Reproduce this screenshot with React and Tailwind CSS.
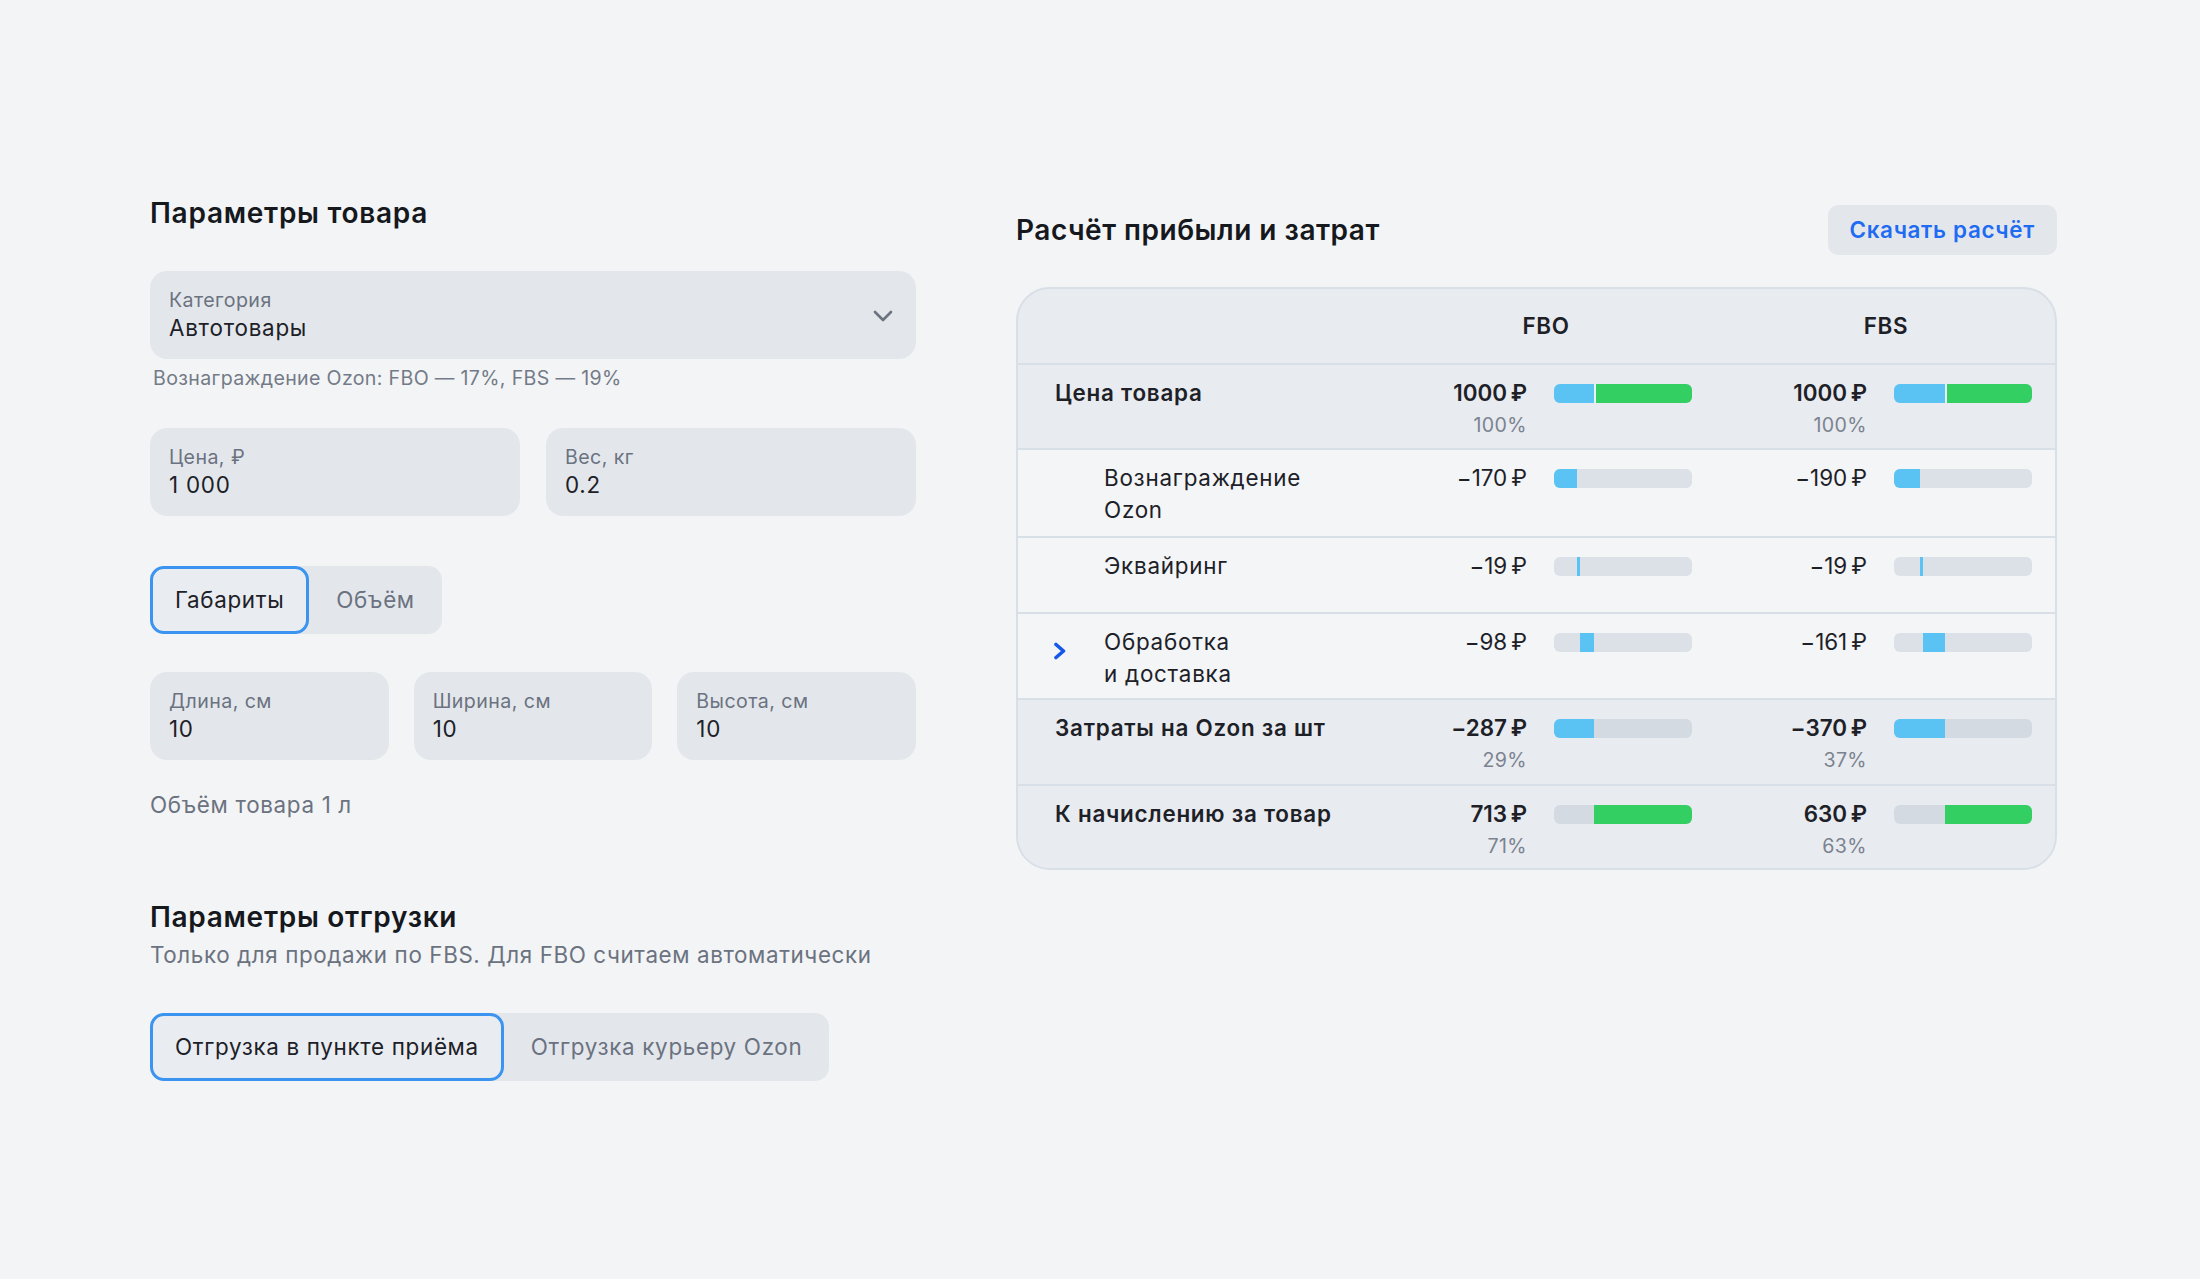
import React from 'react'

// Калькулятор Ozon: параметры товара слева, расчёт прибыли справа

function Field({ label, value, className = '' }) {
  return (
    <div className={`relative h-[88px] rounded-[17px] bg-[#e3e7ec] pl-[19px] pt-[15px] ${className}`}>
      <div className="text-[19.6px] leading-[28px] tracking-[0.022em] text-[#6b7280]">{label}</div>
      <div className="text-[22.4px] leading-[28px] tracking-[0.034em] text-[#1d2127]">{value}</div>
    </div>
  )
}

function Segmented({ options, active }) {
  return (
    <div className="inline-flex h-[68px] rounded-[14px] bg-[#e3e7ec]">
      {options.map((o, i) =>
        i === active ? (
          <button
            key={o}
            className="rounded-[14px] border-[3px] border-[#3b94ef] bg-[#e9edf2] px-[22px] text-[22.4px] tracking-[0.03em] text-[#1d2127]"
          >
            {o}
          </button>
        ) : (
          <button key={o} className="px-[27px] text-[22.4px] tracking-[0.03em] text-[#6b7280]">
            {o}
          </button>
        )
      )}
    </div>
  )
}

const B = 'b'
const G = 'g'

const rows = [
  {
    label: ['Цена товара'],
    strong: true,
    h: 'h-[85px]',
    fbo: { v: '1000\u202F₽', p: '100%', segs: [{ l: 0, w: 28.7, c: B }, { l: 28.7, w: 71.3, c: G, gap: true }] },
    fbs: { v: '1000\u202F₽', p: '100%', segs: [{ l: 0, w: 37, c: B }, { l: 37, w: 63, c: G, gap: true }] },
  },
  {
    label: ['Вознаграждение', 'Ozon'],
    h: 'h-[88px]',
    fbo: { v: '−170\u202F₽', segs: [{ l: 0, w: 17, c: B }] },
    fbs: { v: '−190\u202F₽', segs: [{ l: 0, w: 19, c: B }] },
  },
  {
    label: ['Эквайринг'],
    h: 'h-[76px]',
    fbo: { v: '−19\u202F₽', segs: [{ l: 17, w: 1.9, c: B }] },
    fbs: { v: '−19\u202F₽', segs: [{ l: 19, w: 1.9, c: B }] },
  },
  {
    label: ['Обработка', 'и доставка'],
    chevron: true,
    h: 'h-[86px]',
    fbo: { v: '−98\u202F₽', segs: [{ l: 18.9, w: 9.8, c: B }] },
    fbs: { v: '−161\u202F₽', segs: [{ l: 20.9, w: 16.1, c: B }] },
  },
  {
    label: ['Затраты на Ozon за шт'],
    strong: true,
    h: 'h-[86px]',
    fbo: { v: '−287\u202F₽', p: '29%', segs: [{ l: 0, w: 28.7, c: B }] },
    fbs: { v: '−370\u202F₽', p: '37%', segs: [{ l: 0, w: 37, c: B }] },
  },
  {
    label: ['К начислению за товар'],
    strong: true,
    h: 'h-[84px]',
    fbo: { v: '713\u202F₽', p: '71%', segs: [{ l: 28.7, w: 71.3, c: G }] },
    fbs: { v: '630\u202F₽', p: '63%', segs: [{ l: 37, w: 63, c: G }] },
  },
]

function Bar({ segs, dark }) {
  return (
    <div
      className={`relative ml-[27px] mt-[7px] h-[19px] w-[138px] shrink-0 overflow-hidden rounded-[6px] ${
        dark ? 'bg-[#d4dae2]' : 'bg-[#dce1e7]'
      }`}
    >
      {segs.map((s, i) => (
        <div
          key={i}
          className={`absolute inset-y-0 ${s.c === G ? 'bg-[#33cf62]' : 'bg-[#5bc3f3]'} ${
            s.gap ? 'border-l-2 border-[#e6f3f2]' : ''
          }`}
          style={{ left: `${s.l}%`, width: `${s.w}%` }}
        />
      ))}
    </div>
  )
}

function Cell({ data, strong }) {
  return (
    <div className="flex items-start">
      <div className="w-[127px] text-right">
        <div
          className={`whitespace-nowrap text-[22.4px] leading-[32px] tracking-[0.03em] text-[#1d2127] ${
            strong ? 'font-semibold' : 'font-normal'
          }`}
        >
          {data.v}
        </div>
        {data.p && (
          <div className="text-[19.6px] leading-[32px] tracking-[0.02em] text-[#7b8390]">{data.p}</div>
        )}
      </div>
      <Bar segs={data.segs} dark={strong} />
    </div>
  )
}

function Row({ row }) {
  return (
    <div
      className={`grid grid-cols-[1fr_292px_292px] gap-x-[48px] border-t-2 border-[#d8dfe7] pl-[37px] pr-[23px] pt-[12px] ${row.h} ${
        row.strong ? 'bg-[#e8ebef]' : 'bg-[#f3f5f7]'
      }`}
    >
      <div className="flex items-start">
        {!row.strong && (
          <div className="w-[49px] shrink-0">
            {row.chevron && (
              <svg className="mt-[16px] -ml-[2px]" width="14" height="18" viewBox="0 0 14 18" fill="none">
                <path d="M3 2.5 L10.5 9 L3 15.5" stroke="#1658ea" strokeWidth="3.6" strokeLinecap="round" strokeLinejoin="round" />
              </svg>
            )}
          </div>
        )}
        <div
          className={`whitespace-nowrap text-[22.4px] leading-[32px] tracking-[0.034em] text-[#1d2127] ${
            row.strong ? 'font-semibold' : 'font-normal'
          }`}
        >
          {row.label.map(l => (
            <div key={l}>{l}</div>
          ))}
        </div>
      </div>
      <Cell data={row.fbo} strong={row.strong} />
      <Cell data={row.fbs} strong={row.strong} />
    </div>
  )
}

export default function App() {
  return (
    <div className="min-h-screen bg-[#f3f4f6] font-['Inter','Noto_Sans',sans-serif] antialiased">
      <div className="flex gap-[100px] pl-[150px] pt-[195px]">
        {/* левая колонка */}
        <div className="w-[766px] shrink-0">
          <h2 className="text-[28px] font-semibold leading-[36px] tracking-[0.026em] text-[#15181d]">
            Параметры товара
          </h2>

          <div className="relative mt-[40px]">
            <Field label="Категория" value="Автотовары" />
            <svg
              className="absolute right-[23px] top-[39px]"
              width="20"
              height="12"
              viewBox="0 0 20 12"
              fill="none"
            >
              <path d="M2 2 L10 10 L18 2" stroke="#6b7280" strokeWidth="2.6" strokeLinecap="round" strokeLinejoin="round" />
            </svg>
          </div>
          <p className="mt-[5px] pl-[3px] text-[19.6px] leading-[28px] tracking-[0.017em] text-[#737b88]">
            Вознаграждение Ozon: FBO — 17%, FBS — 19%
          </p>

          <div className="mt-[36px] grid grid-cols-2 gap-[26px]">
            <Field label="Цена, ₽" value="1 000" />
            <Field label="Вес, кг" value="0.2" />
          </div>

          <div className="mt-[50px]">
            <Segmented options={['Габариты', 'Объём']} active={0} />
          </div>

          <div className="mt-[38px] grid grid-cols-3 gap-[25px]">
            <Field label="Длина, см" value="10" />
            <Field label="Ширина, см" value="10" />
            <Field label="Высота, см" value="10" />
          </div>

          <p className="mt-[30px] text-[22.4px] leading-[30px] tracking-[0.03em] text-[#6b7280]">Объём товара 1 л</p>

          <h2 className="mt-[79px] text-[28px] font-semibold leading-[36px] tracking-[0.025em] text-[#15181d]">
            Параметры отгрузки
          </h2>
          <p className="mt-[5px] text-[22.4px] leading-[30px] tracking-[0.027em] text-[#6b7280]">
            Только для продажи по FBS. Для FBO считаем автоматически
          </p>

          <div className="mt-[43px]">
            <Segmented options={['Отгрузка в пункте приёма', 'Отгрузка курьеру Ozon']} active={0} />
          </div>
        </div>

        {/* правая колонка */}
        <div className="w-[1041px] shrink-0 pt-[10px]">
          <div className="flex h-[50px] items-center justify-between">
            <h2 className="text-[28px] font-semibold leading-[36px] tracking-[0.018em] text-[#15181d]">
              Расчёт прибыли и затрат
            </h2>
            <button className="h-[50px] rounded-[10px] bg-[#e3e7ec] px-[22px] text-[22.4px] font-semibold tracking-[0.03em] text-[#1f6bf2]">
              Скачать расчёт
            </button>
          </div>

          <div className="mt-[32px] overflow-hidden rounded-[34px] border-2 border-[#d8dfe7] bg-[#e8ebef]">
            <div className="grid h-[74px] grid-cols-[1fr_292px_292px] items-center gap-x-[48px] pl-[37px] pr-[23px]">
              <div />
              <div className="text-center text-[22.4px] font-semibold tracking-[0.03em] text-[#1d2127]">FBO</div>
              <div className="text-center text-[22.4px] font-semibold tracking-[0.03em] text-[#1d2127]">FBS</div>
            </div>
            {rows.map(r => (
              <Row key={r.label[0]} row={r} />
            ))}
          </div>
        </div>
      </div>
    </div>
  )
}
